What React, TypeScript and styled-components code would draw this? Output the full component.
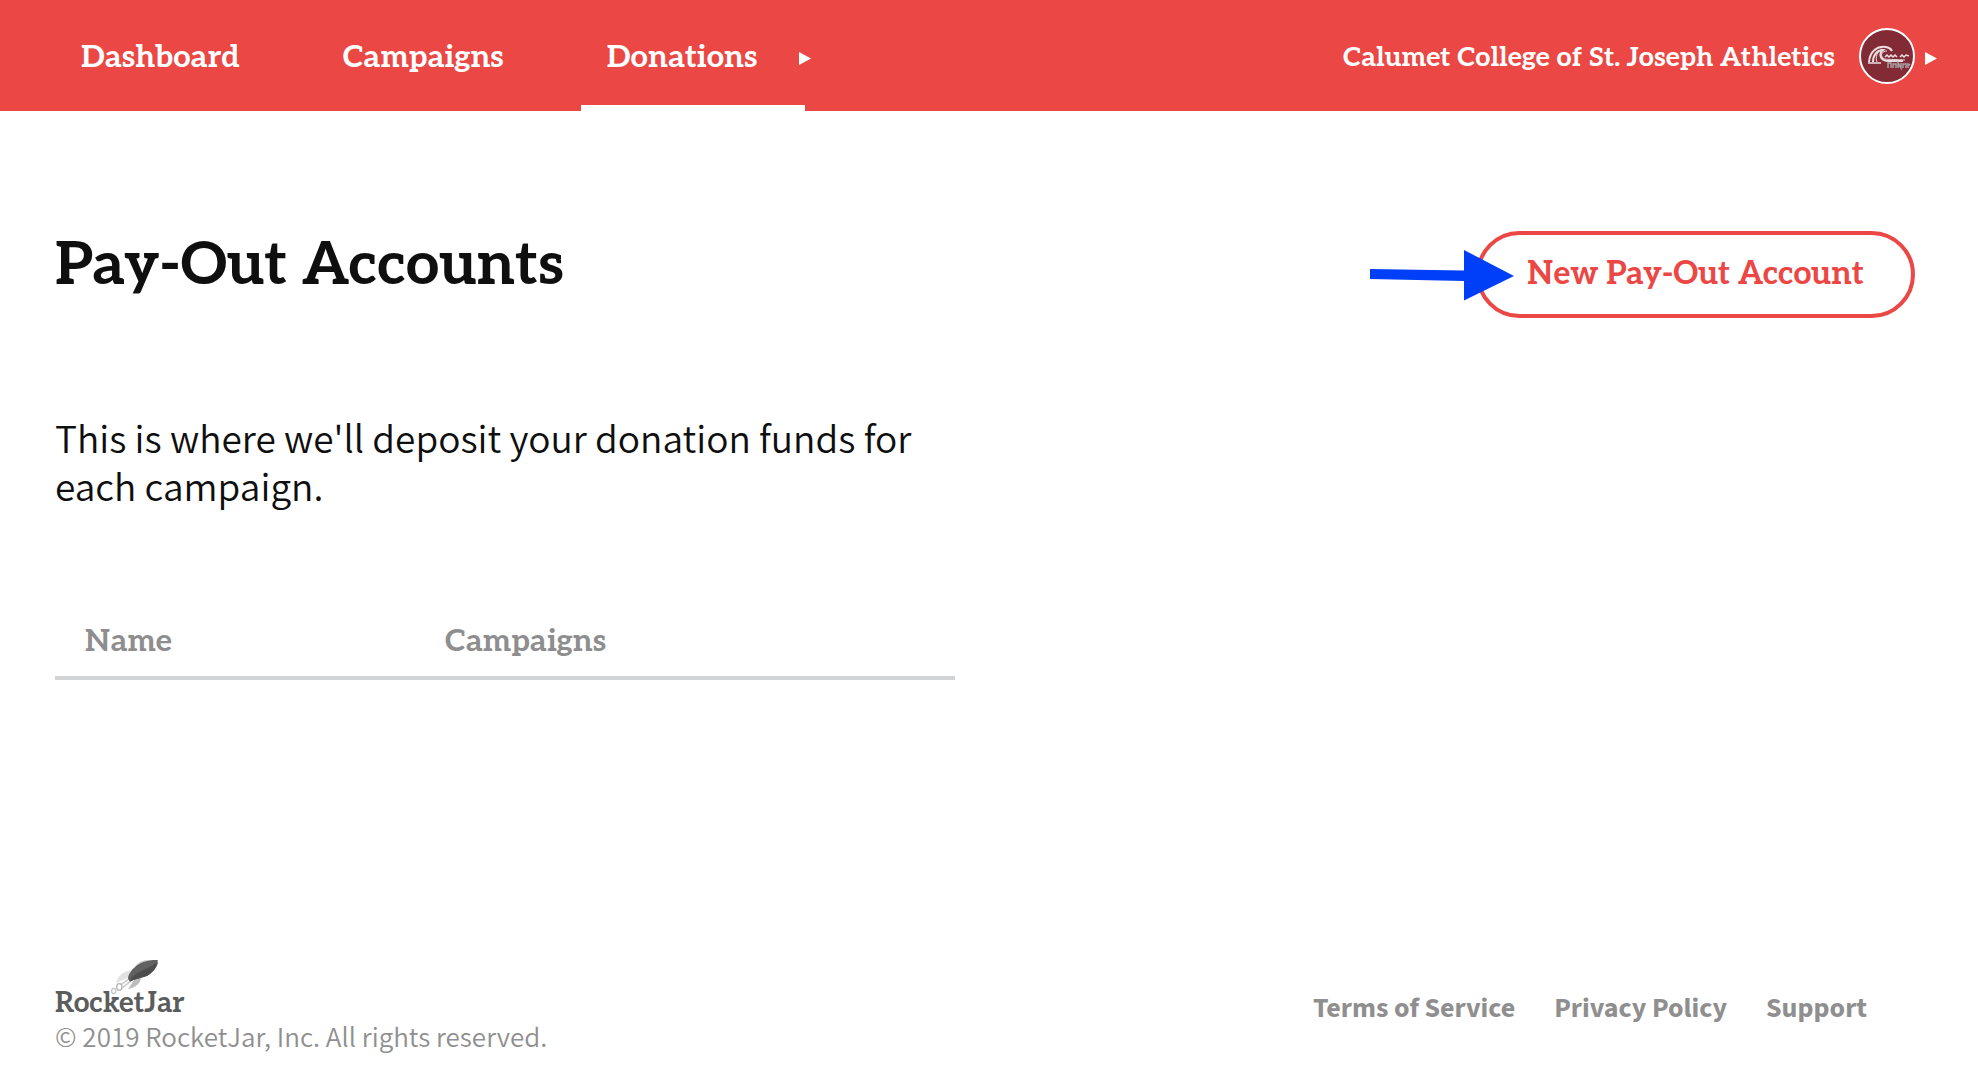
import React from "react";
import styled, { createGlobalStyle } from "styled-components";

const slab = `"Aleo", "DejaVu Serif Condensed", "DejaVu Serif", serif`;
const sans = `"Source Sans Pro", "Source Sans 3", "Noto Sans CJK SC", "Noto Sans", sans-serif`;
const body = `"Noto Sans CJK SC", "Noto Sans", sans-serif`;
const red = "#ea4745";

const GlobalStyle = createGlobalStyle`
  *, *::before, *::after { box-sizing: border-box; }
  body {
    margin: 0;
    background: #fff;
    color: #0f0f0f;
    font-family: ${sans};
  }
  a { color: inherit; text-decoration: none; }
  button { font: inherit; color: inherit; cursor: pointer; }
`;

const Page = styled.div`
  display: flex;
  flex-direction: column;
  min-height: 100vh;
`;

const Header = styled.header`
  display: flex;
  align-items: stretch;
  justify-content: space-between;
  height: 111px;
  padding: 0 41px 0 55px;
  background: ${red};
  color: #fff;
  font-family: ${slab};
  font-weight: 700;
`;

const Nav = styled.nav`
  display: flex;
  gap: 51px;
`;

const NavLink = styled.a<{ $active?: boolean; $menu?: boolean }>`
  display: flex;
  align-items: center;
  padding: 10px ${(p) => (p.$menu ? "47px" : "26px")} 0 26px;
  border-bottom: 6px solid ${(p) => (p.$active ? "#fff" : "transparent")};
  font-size: 31px;
  line-height: 36px;
`;

const NavGroup = styled.div`
  display: flex;
  position: relative;
`;

const MenuToggle = styled.button<{ $overlap?: boolean }>`
  display: flex;
  align-items: center;
  padding: 6px 0 0;
  border: 0;
  background: none;
  ${(p) => p.$overlap && "position: absolute; top: 0; bottom: 0; right: -6px;"}
`;

const Account = styled.div`
  display: flex;
  align-items: center;
  font-size: 27px;
  line-height: 32px;
`;

const AccountName = styled.span`
  padding-top: 4px;
`;

const Avatar = styled.svg`
  width: 56px;
  height: 56px;
  margin: 0 10px 0 24px;
`;

const Main = styled.main`
  flex: 1;
  padding: 120px 63px 0 55px;
`;

const TitleRow = styled.div`
  display: flex;
  align-items: flex-start;
  justify-content: space-between;
`;

const Title = styled.h1`
  margin: 0;
  font: 700 60px/70px ${slab};
`;

const Action = styled.div`
  position: relative;
`;

const OutlineButton = styled.button`
  height: 87px;
  padding: 0 47px 2px;
  border: 4px solid ${red};
  border-radius: 44px;
  background: #fff;
  color: ${red};
  font: 700 32px/36px ${slab};
`;

const Pointer = styled.svg`
  position: absolute;
  top: 19px;
  left: -106px;
  width: 144px;
  height: 51px;
  pointer-events: none;
`;

const Intro = styled.p`
  max-width: 900px;
  margin: 95px 0 0;
  font: 350 37px/48px ${body};
`;

const Table = styled.table`
  width: 900px;
  max-width: 100%;
  margin-top: 91px;
  border-collapse: collapse;
  table-layout: fixed;
`;

const HeadCell = styled.th<{ $width: string }>`
  width: ${(p) => p.$width};
  padding: 24px 30px 16px;
  border-bottom: 4px solid #d1d3d4;
  color: #8e8e8e;
  font: 700 31px/36px ${slab};
  text-align: left;
`;

const Footer = styled.footer`
  display: flex;
  align-items: flex-end;
  justify-content: space-between;
  padding: 0 111px 34px 55px;
  color: #8f8f8f;
  font-size: 28px;
  line-height: 36px;
`;

const Brand = styled.div`
  position: relative;
  width: max-content;
  padding-top: 30px;
  color: #5c5c5c;
  font: 700 28px/28px ${slab};
`;

const Rocket = styled.svg`
  position: absolute;
  top: 0;
  left: 55px;
  width: 50px;
  height: 38px;
`;

const Copyright = styled.p`
  margin: 0;
  font: 350 26px/36px ${body};
`;

const FooterLinks = styled.nav`
  display: flex;
  gap: 39px;
  padding-bottom: 28px;
  font-weight: 700;
`;

const Triangle = () => (
  <svg width="12" height="13" viewBox="0 0 12 13" aria-hidden="true">
    <path d="M0 0L12 6.5L0 13Z" fill="#fff" />
  </svg>
);

const TeamAvatar = () => (
  <Avatar viewBox="0 0 56 56" role="img" aria-label="Team logo">
    <circle cx="28" cy="28" r="27" fill="#822a35" stroke="#fff" strokeWidth="2" />
    <g fill="none" stroke="#eadde0">
      <path d="M10 34C11 23 18 18 27 19C30 19.500 32 21 33 23" strokeWidth="2" />
      <path d="M14 34C14 27 18 22 24 22C20 25 20 33 30 33H44" strokeWidth="2" />
      <path d="M18 34C16 29 18 24 23 21M28 23C23 23 21 27 24 30C26 32 30 31 46 32" strokeWidth="1" />
      <path d="M9 35H22" strokeWidth="1.500" />
      <path d="M26 29L28 27L30 29L32 27L34 29L36 27L38 29M41 29L43 27L45 29L47 27L50 28" strokeWidth="1.500" />
    </g>
    <path
      d="M29 40V35H32V40M34 40V36H37V40M39 40V35L42 40V35M44 40V36H47V40M49 40V36L51 37"
      fill="none"
      stroke="#a8a2a5"
      strokeWidth="1.500"
    />
  </Avatar>
);

export default function App() {
  return (
    <Page>
      <GlobalStyle />
      <Header>
        <Nav aria-label="Main">
          <NavLink href="#dashboard">Dashboard</NavLink>
          <NavLink href="#campaigns">Campaigns</NavLink>
          <NavGroup>
            <NavLink href="#donations" $active $menu>Donations</NavLink>
            <MenuToggle $overlap aria-label="Open donations menu">
              <Triangle />
            </MenuToggle>
          </NavGroup>
        </Nav>
        <Account>
          <AccountName>Calumet College of St. Joseph Athletics</AccountName>
          <TeamAvatar />
          <MenuToggle aria-label="Open account menu">
            <Triangle />
          </MenuToggle>
        </Account>
      </Header>

      <Main>
        <TitleRow>
          <Title>Pay-Out Accounts</Title>
          <Action>
            <OutlineButton>New Pay-Out Account</OutlineButton>
            <Pointer viewBox="0 0 144 51" aria-hidden="true">
              <path d="M0 19L94 20.500V0L144 26L94 50.500V31L0 29Z" fill="#003ff8" />
            </Pointer>
          </Action>
        </TitleRow>
        <Intro>This is where we'll deposit your donation funds for each campaign.</Intro>
        <Table>
          <thead>
            <tr>
              <HeadCell scope="col" $width="40%">Name</HeadCell>
              <HeadCell scope="col" $width="60%">Campaigns</HeadCell>
            </tr>
          </thead>
        </Table>
      </Main>

      <Footer>
        <div>
          <Brand>
            <Rocket viewBox="210 45 150 114" aria-hidden="true">
              <path d="M284 66C296 50 310 45 330 46L300 62Z" fill="#c9c9c9" />
              <path d="M303 95C302 116 290 124 264 133L284 102Z" fill="#bdbdbd" />
              <path d="M272 76C248 80 234 94 228 114L264 98Z" fill="#e2e2e2" />
              <path d="M244 118L264 104M248 128L270 110" stroke="#cccccc" strokeWidth="5" fill="none" />
              <path d="M264 102C264 84 284 62 308 52C324 46 340 44 353 45C355 60 342 80 322 92C304 100 288 99 270 110Z" fill="#616161" />
              <path d="M270 105C290 78 325 72 354 52C350 68 338 84 322 92C304 100 288 99 270 110Z" fill="#4d4d4d" />
              <ellipse cx="238" cy="126" rx="8" ry="10" fill="#fff" stroke="#b5b5b5" strokeWidth="4" />
              <ellipse cx="221" cy="138" rx="6" ry="8" fill="#fff" stroke="#c4c4c4" strokeWidth="4" />
            </Rocket>
            RocketJar
          </Brand>
          <Copyright>© 2019 RocketJar, Inc. All rights reserved.</Copyright>
        </div>
        <FooterLinks aria-label="Legal">
          <a href="#terms">Terms of Service</a>
          <a href="#privacy">Privacy Policy</a>
          <a href="#support">Support</a>
        </FooterLinks>
      </Footer>
    </Page>
  );
}
